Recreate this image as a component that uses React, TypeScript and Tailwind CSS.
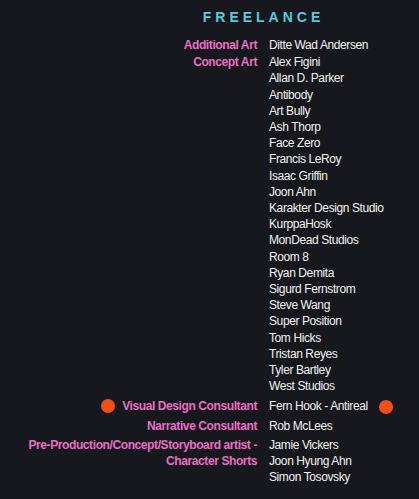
const rows: { role: string; names: string[]; dot?: boolean; gap: string }[] = [
  { role: 'Additional Art', names: ['Ditte Wad Andersen'], gap: 'mt-0' },
  {
    role: 'Concept Art',
    names: [
      'Alex Figini', 'Allan D. Parker', 'Antibody', 'Art Bully', 'Ash Thorp', 'Face Zero',
      'Francis LeRoy', 'Isaac Griffin', 'Joon Ahn', 'Karakter Design Studio', 'KurppaHosk',
      'MonDead Studios', 'Room 8', 'Ryan Demita', 'Sigurd Fernstrom', 'Steve Wang',
      'Super Position', 'Tom Hicks', 'Tristan Reyes', 'Tyler Bartley', 'West Studios',
    ],
    gap: 'mt-[1px]',
  },
  { role: 'Visual Design Consultant', names: ['Fern Hook - Antireal'], dot: true, gap: 'mt-[4px]' },
  { role: 'Narrative Consultant', names: ['Rob McLees'], gap: 'mt-[3px]' },
  {
    role: 'Pre-Production/Concept/Storyboard artist - Character Shorts',
    names: ['Jamie Vickers', 'Joon Hyung Ahn', 'Simon Tosovsky'],
    gap: 'mt-[3px]',
  },
]

export default function App() {
  return (
    <div className="w-[419px] h-[499px] bg-[#16181d] overflow-hidden font-['Liberation_Sans',Arial,sans-serif] text-[12px]">
      <h2 className="pt-[9px] pl-[108px] text-center text-[14px] font-bold tracking-[4px] text-[#5bc9dc] leading-[17px]">
        FREELANCE
      </h2>
      <div className="mt-[11px] flex flex-col">
        {rows.map((r) => (
          <div key={r.role} className={`relative flex gap-[12px] leading-[16.2px] tracking-[-0.4px] ${r.gap}`}>
            <div className="w-[257px] shrink-0 pl-[20px] text-right font-bold text-[#ea6ec6]">{r.role}</div>
            <div className="flex flex-col text-[#f2f2f2]">
              {r.names.map((n) => (
                <span key={n}>{n}</span>
              ))}
            </div>
            {r.dot && (
              <>
                <span className="absolute left-[101px] top-[1px] w-[14px] h-[14px] rounded-full bg-[#f24e17]" />
                <span className="absolute left-[379px] top-[2px] w-[14px] h-[14px] rounded-full bg-[#f24e17]" />
              </>
            )}
          </div>
        ))}
      </div>
    </div>
  )
}
